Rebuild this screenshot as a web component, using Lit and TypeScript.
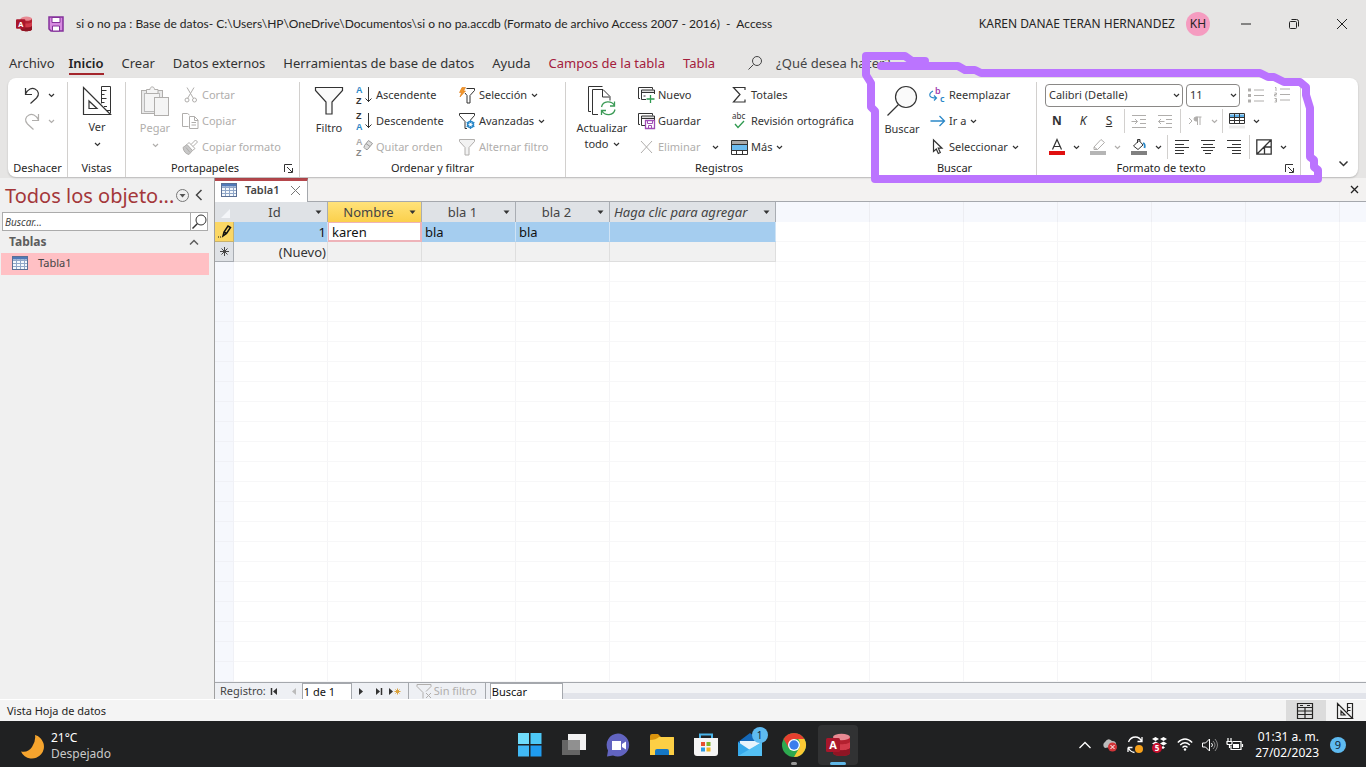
import { LitElement, html, css, svg, nothing } from "lit";
import { customElement, property } from "lit/decorators.js";
import { classMap } from "lit/directives/class-map.js";

const ico = (w: number, h: number, body: unknown) =>
  html`<svg width=${w} height=${h} viewBox="0 0 ${w} ${h}" fill="none" stroke="currentColor" aria-hidden="true">${body}</svg>`;

const chevron = () => ico(7, 5, svg`<path d="M1 1l2.500 2.500l2.500-2.500" stroke-width="1.200"/>`);

const letters = (top: string, bottom: string, topColor: string, bottomColor: string, tail: unknown) =>
  ico(17, 18, svg`
    <text x="0" y="7" font-size="9" font-family="Liberation Sans" font-weight="700" stroke="none" fill=${topColor}>${top}</text>
    <text x="0" y="18" font-size="9" font-family="Liberation Sans" font-weight="700" stroke="none" fill=${bottomColor}>${bottom}</text>
    ${tail}`);

const downArrow = svg`<path d="M12.500 1v15M9.500 12.500l3 3l3-3"/>`;
const cards = svg`<path d="M2 11.500h-1.500v-11h14v2"/><path d="M3 3h13v2.500h-13z" fill="#ddd" stroke="none"/><path d="M8 12.500h-4.500v-9.500h13v4M3.500 5.500h13"/>`;

const icons = {
  undo: ico(16, 17, svg`<path d="M1.500 1v6.500h6.500M1.500 7C4 2 8 .5 11 2c4 2 4.500 6 1.500 9l-6 5.500" stroke-width="1.200"/>`),
  redo: ico(16, 17, svg`<path d="M14.500 1v6.500h-6.500M14.500 7C12 2 8 .5 5 2c-4 2-4.500 6-1.500 9l6 5.500" stroke-width="1.200"/>`),
  view: ico(28, 29, svg`<path d="M.5 1.500v27h27zM6 15v7.500h8z" stroke-width="1.200"/><path d="M18.500 17.500v-17h9v27M18.500 4.500h5M18.500 8.500h3M18.500 12.500h5M18.500 16.500h3M21 20.500h3M24 24.500h3"/>`),
  paste: ico(28, 30, svg`<rect x=".5" y="4.500" width="21" height="23" fill="#e9e9e9"/><rect x="3.500" y="7.500" width="15" height="18" fill="#f4f4f4" stroke="#bbb"/><path d="M5.500 7.500v-4h3.500c0-3.500 4.500-3.500 4.500 0h3.500v4z" fill="#f4f4f4"/><rect x="13.500" y="11.500" width="14" height="18" fill="#f4f4f4"/>`),
  cut: ico(16, 16, svg`<path d="M4 .5l6.500 11M11 .5l-6.500 11"/><circle cx="4" cy="13" r="2"/><circle cx="11.500" cy="13" r="2"/>`),
  copy: ico(17, 16, svg`<path d="M6.500 13.500h-6v-13h5l2 1.500"/><path d="M7.500 3.500h5l3.500 3.500v8.500h-8.500zM12.500 3.500v4h3.500M9.500 9.500h4.500M9.500 12h4.500"/>`),
  brush: ico(17, 16, svg`<path d="M1 8.500l4-3l5.500 6l-3.500 4q-5-1-6-7z" fill="#c8c8c8"/><path d="M5 5.500l2-2l6 6l-2.500 2M9 5.500l4.500-4.500l2 2l-4.500 4.500M4 8.500l4 5"/>`),
  funnel: ico(28, 30, svg`<path d="M.5 1.500h27v3l-10.500 11.500v12h-6v-12l-10.500-11.500z" fill="#fafafa" stroke-width="1.200"/>`),
  asc: letters("A", "Z", "#2b88c8", "#333", downArrow),
  desc: letters("Z", "A", "#333", "#2b88c8", downArrow),
  clearSort: letters("A", "Z", "#aaa", "#888", svg`<path d="M8.500 7.500l4-5l4 3l-5 6h-1.500l-2-2zM10 5.500l4 3" fill="#ddd" stroke="#999"/>`),
  selection: ico(17, 17, svg`<path d="M7.500 1.500h8v2l-4.500 5v7.500h-3v-7.500l-2-2.500"/><path d="M3 .5h3.500l-2 3.500h2l-5.500 6l1.500-4.500h-2z" fill="#f0962c" stroke="#e07a10" stroke-width=".6"/>`),
  advanced: ico(17, 17, svg`<path d="M8 15.500h-2v-7l-5.500-6v-2h15v2l-4 4.500"/><circle cx="11.500" cy="11.500" r="3" stroke="#2b88c8" stroke-width="1.500"/><path d="M11.500 7v9M7.600 9.200l7.800 4.600M7.600 13.800l7.800-4.600" stroke="#2b88c8" stroke-width="1.300"/><circle cx="11.500" cy="11.500" r="1.500" fill="#fff" stroke="none"/>`),
  toggleFilter: ico(17, 17, svg`<path d="M.5 .5h15v2l-5.500 6v7.500h-4v-7.500l-5.500-6z" fill="#f2f2f2"/>`),
  refresh: ico(28, 30, svg`<path d="M3 25.500h-2.500v-25h14" /><path d="M10 28.500h-5.500v-25h10.500l7 7v4M14.500 4v7h7"/><path d="M13.500 21c1.500-6.500 10-6.500 13-1.500M26.500 15.500v4.500h-4.500M27 23.500c-1.500 6.500-10 6.500-13 1.500M13.500 29v-4.500h4.500" stroke="#3a9a55" stroke-width="1.300"/>`),
  newRec: ico(17, 16, svg`${cards}<path d="M5.500 9h3" stroke-dasharray="2 1"/><path d="M12.500 8v8M8.500 12h8" stroke="#2f9a50" stroke-width="1.300"/>`),
  saveRec: ico(17, 16, svg`${cards}<path d="M7.500 7.500h9v8h-9z" fill="#fff" stroke="#a04db5" stroke-width="1.300"/><path d="M9.500 8v2.500h5v-2.500M10.500 15v-2.500h3v2.500" stroke="#a04db5"/>`),
  remove: ico(17, 16, svg`<path d="M3 2l11 12M14 2l-11 12"/>`),
  sigma: ico(15, 16, svg`<path d="M13 3v-2.500h-11.500l6.500 7l-6.500 7.500h11.500v-2.500" stroke-width="1.200"/>`),
  spell: ico(17, 18, svg`<text x="1" y="7" font-size="8" font-family="Noto Sans" stroke="none" fill="#333">abc</text><path d="M4 12l3 3.500l6-6.500" stroke="#2f9a50" stroke-width="1.300"/>`),
  more: ico(17, 17, svg`<path d="M1 2h15v3h-15z" fill="#aaa" stroke="none"/><path d="M1 6h15v5h-15z" fill="#6cbcf0" stroke="none"/><path d="M.5 1.500h16v14h-16zM.5 5.500h16M.5 11.500h16M5.500 11v5M11.500 11v5M5.500 5v1M11.500 5v1"/>`),
  find: ico(30, 31, svg`<circle cx="19" cy="11" r="10.500" fill="#fafafa" stroke-width="1.200"/><path d="M11.500 18.500l-11 11" stroke-width="1.200"/>`),
  replace: ico(17, 18, svg`<text x="6" y="8" font-size="9" font-family="Noto Sans" font-weight="600" stroke="none" fill="#a33fb0">b</text><text x="11" y="16" font-size="9" font-family="Noto Sans" font-weight="600" stroke="none" fill="#2b88c8">c</text><path d="M4 5q-4 2-3 5q1 2 6 2M5 9.500l2.500 2.500l-2.500 2.500" stroke="#2b88c8" stroke-width="1.200"/>`),
  goto: ico(16, 12, svg`<path d="M.5 6h14M9.500 1l5 5l-5 5" stroke="#2b88c8" stroke-width="1.300"/>`),
  pointer: ico(12, 16, svg`<path d="M1.500 1v11.500l2.800-2.500l2 4.500l2-1l-2-4.300h3.700z" stroke-width="1.200"/>`),
  bullets: ico(16, 15, svg`<path d="M6 2h10M6 7.500h10M6 13h10"/><path d="M0 2h3M0 7.500h3M0 13h3" stroke-width="3"/>`),
  numbers: ico(16, 16, svg`<path d="M6 2h10M6 7.500h10M6 13h10"/><path d="M1 .5h1v3.500M.5 6h2v1.500h-2v1.500h2M.5 11.500h2v3.500h-2M1 13.200h1.500"/>`),
  indent: ico(16, 13, svg`<path d="M1 .5h14M9 4.500h6M9 8.500h6M1 12.500h14M.5 6.500h6M4 4l2.500 2.500l-2.500 2.500"/>`),
  outdent: ico(16, 13, svg`<path d="M1 .5h14M9 4.500h6M9 8.500h6M1 12.500h14M1.500 6.500h6M4 4l-2.500 2.500l2.500 2.500"/>`),
  pilcrow: ico(14, 10, svg`<path d="M1 2l3 3l-3 3M9.500 1v8M12 1v8M13.500 1h-5"/><path d="M9.500 1h-1.500q-2 0-2 2t2 2h1.500z" fill="currentColor"/>`),
  gridTable: ico(16, 16, svg`<path d="M1 1.500h14v3h-14z" fill="#5cb0ea" stroke="none"/><path d="M.5 .5h15v10h-15zM.5 4.500h15M.5 7.500h15M5.500 1v9M10.500 1v9"/><path d="M0 14h16" stroke="#ececec" stroke-width="3"/>`),
  fontColor: ico(16, 16, svg`<path d="M3.500 10.500l4.500-10l4.500 10M5 7.500h6" stroke-width="1.200"/><path d="M0 14h16" stroke="#e01010" stroke-width="4"/>`),
  highlight: ico(16, 16, svg`<path d="M4 8l7-7.500l3.500 3l-7 7h-3.500zM4 8l3.500 2.500"/><path d="M0 14h16" stroke="#b5b5b5" stroke-width="4"/>`),
  fill: ico(16, 16, svg`<path d="M2.500 7l5.500-5.500l4 4.500l-5 4.500zM6.500 4v-3.500h2.500v2"/><path d="M12 4q2.500 1 1.500 5" stroke="#2b88c8" stroke-width="1.800"/><path d="M0 14h16" stroke="#808080" stroke-width="4"/>`),
  left: ico(16, 15, svg`<path d="M1 .5h14M1 4.500h9M1 7.500h14M1 10.500h9M1 13.500h9"/>`),
  center: ico(16, 15, svg`<path d="M1 .5h14M3 4.500h10M1 7.500h14M3 10.500h10M5 13.500h6"/>`),
  right: ico(16, 15, svg`<path d="M1 .5h14M6 4.500h9M1 7.500h14M6 10.500h9M6 13.500h9"/>`),
  altRow: ico(16, 16, svg`<path d="M.8.800h14.400v14.400h-14.400zM.8 15.200l14.400-14.400M8 8h7M8.500 8v7" stroke-width="1.300"/>`),
  launcher: ico(9, 9, svg`<path d="M.5 8v-7.500h7.500M3 3l5 5M8.500 4v4.500h-4.500"/>`),
  table: ico(16, 14, svg`<rect x=".5" y=".5" width="15" height="13" fill="#f4f8fc" stroke="#5a6f94"/><path d="M1 1h14v2.500h-14z" fill="#4f79b8" stroke="none"/><path d="M1 4.500h14M1 7.500h14M1 10.500h14M4.500 3v10M8.500 3v10M12.500 3v10" stroke="#8fa6c8"/>`),
  access: (s: number) => html`<svg width=${s} height=${s} viewBox="0 0 24 24" aria-hidden="true"><path d="M7 4v16c0 4 17 4 17 0v-16z" fill="#b3202f"/><path d="M7 9c2 3 15 3 17 0v6c-2 3-15 3-17 0z" fill="#d13a4a"/><path d="M7 15c2 3 15 3 17 0v5c0 4-17 4-17 0z" fill="#8f1524"/><ellipse cx="15.500" cy="4" rx="8.500" ry="3.200" fill="#e88a93"/><rect y="5" width="14" height="14" rx="1.500" fill="#a9162b"/><text x="7" y="16" text-anchor="middle" font-size="11" font-weight="700" font-family="Noto Sans" fill="#fff">A</text></svg>`,
};

@customElement("ribbon-group")
export class RibbonGroup extends LitElement {
  @property() label = "";
  @property({ type: Boolean }) launcher = false;

  static styles = css`
    :host { display: grid; grid-template-rows: 78px 16px; border-right: 1px solid #d2d0ce; box-sizing: border-box; flex: none; }
    .body { display: flex; }
    .foot { display: flex; align-items: center; }
    .label { flex: 1; text-align: center; white-space: nowrap; font-size: 11px; line-height: 16px; color: #252423; }
    button { all: unset; display: flex; width: 15px; color: #333; }
  `;

  render() {
    return html`
      <div class="body"><slot></slot></div>
      <div class="foot">
        <span class="label">${this.label}</span>
        ${this.launcher ? html`<button aria-label="Más opciones de ${this.label}">${icons.launcher}</button>` : nothing}
      </div>`;
  }
}

@customElement("app-root")
export class AppRoot extends LitElement {
  static styles = css`
    :host { display: flex; flex-direction: column; height: 100vh; overflow: hidden; background: #e6e5e4; color: #252423; font: 12px/16px "Noto Sans", "Open Sans", sans-serif; }
    * { box-sizing: border-box; }
    button { all: unset; box-sizing: border-box; display: flex; align-items: center; }
    button:focus-visible, a:focus-visible { outline: 1px solid #a4373a; }
    svg { display: block; flex: none; overflow: visible; }
    .center { justify-content: center; }

    .titlebar { display: flex; align-items: center; height: 48px; flex: none; padding-left: 16px; }
    .save { margin: 0 12px 0 16px; }
    .doc { flex: 1; margin: 0; font-family: Lato, sans-serif; font-size: 12px; font-weight: 400; white-space: pre; overflow: hidden; }
    .account { gap: 11px; }
    .avatar { display: grid; place-items: center; width: 24px; height: 24px; border-radius: 50%; background: #f59cc0; }
    .winbtn { width: 48px; height: 48px; color: #222; justify-content: center; }
    .winbtns { display: flex; margin-left: 12px; }

    .tabs { display: flex; height: 30px; flex: none; padding: 5px 0 0 9px; font-size: 13px; line-height: 18px; color: #333; }
    .tab { color: inherit; text-decoration: none; white-space: nowrap; height: 22px; margin-right: 18px; padding-top: 1px; }
    .tab.on { font-weight: 600; color: #222; border-bottom: 2px solid #a4262c; margin-left: -4px; }
    .tab.ctx { color: #a4203c; }
    .tell { gap: 14px; align-self: flex-start; height: 20px; margin-left: 15px; color: #444; }

    .stage { position: relative; flex: none; }
    .ribbon { display: flex; margin: 0 8px; padding: 4px 6px 0 0; height: 99px; background: #fff; border-radius: 8px; box-shadow: 0 1px 2px #0003; color: #333; font-size: 11px; }
    .markup { position: absolute; left: 0; top: -78px; pointer-events: none; z-index: 2; }
    .g-undo { width: 60px; } .g-view { width: 58px; } .g-clip { width: 174px; } .g-sort { width: 266px; }
    .g-rec { width: 307px; } .g-find { width: 164px; } .g-text { width: 264px; }
    .off, .nofilter.off { color: #b0aeac; }
    .stack { display: flex; flex-direction: column; }
    .row { display: flex; align-items: center; height: 26px; gap: 3px; white-space: nowrap; }
    .row.spread { justify-content: space-between; }
    .tool { height: 26px; gap: 3px; white-space: nowrap; }
    .tool > svg { margin-left: 1px; }
    .slot { display: flex; justify-content: center; width: 17px; flex: none; }
    .big { flex-direction: column; text-align: center; padding-top: 4px; gap: 4px; line-height: 16px; width: 58px; margin-right: -2px; }
    .big svg:not(:first-child) { margin-top: 3px; }
    .big.wide { width: 72px; margin-right: 0; }
    .inline { display: flex; align-items: center; gap: 4px; }
    .undos { padding: 0 0 0 16px; }
    .undos .row { gap: 8px; }
    .c-sort { width: 103px; } .c-rec { width: 93px; padding-right: 10px; }
    .fmt { padding-left: 7px; }
    .pick { display: grid; align-items: center; height: 23px; border: 1px solid #8a8886; border-radius: 4px; background: #fff; }
    .pick select { all: unset; grid-area: 1 / 1; padding-left: 3px; line-height: 16px; }
    .pick svg { grid-area: 1 / 1; justify-self: end; margin-right: 2px; pointer-events: none; }
    .pick.name { width: 138px; margin-left: 1px; } .pick.size { width: 54px; }
    .sq { width: 26px; height: 24px; justify-content: center; font-size: 12px; }
    .dd { width: 12px; height: 24px; justify-content: center; }
    .pair { display: flex; margin-right: 3px; }
    .bar { width: 1px; height: 24px; margin: 0 1px 0 2px; background: #d2d0ce; }
    .pair + .bar { margin-left: 0; }
    .tight { gap: 0; }
    .end { margin-left: auto; align-self: flex-end; height: 26px; padding-right: 4px; }

    .main { flex: 1; min-height: 0; display: flex; margin-top: 1px; background: #f0f0f0; border-bottom: 1px solid #fff; }
    .nav { width: 209px; margin-right: 5px; flex: none; }
    .navhead { display: flex; align-items: center; height: 34px; padding: 0 4px 0 5px; gap: 4px; }
    .navhead h2 { flex: 1; margin: 0; padding-top: 2px; font-size: 20px; line-height: 28px; font-weight: 400; color: #a4373a; white-space: nowrap; width: 0; }
    .search { display: flex; height: 19px; margin: 0 1px 0 2px; border: 1px solid #ababab; background: #fff; }
    .search input { all: unset; flex: 1; min-width: 0; padding-left: 2px; font-size: 10px; font-style: italic; color: #444; }
    .search input::placeholder { color: #444; opacity: 1; }
    .search button { width: 17px; border-left: 1px solid #ababab; justify-content: center; color: #333; }
    .navgroup { width: 100%; height: 22px; justify-content: space-between; padding: 0 10px 0 9px; font-size: 12px; font-weight: 700; color: #5d5d5d; }
    .navitem { display: flex; align-items: center; gap: 10px; height: 22px; margin-left: 1px; padding: 0 0 2px 11px; background: #ffc0c4; color: #444; font-size: 11px; text-decoration: none; }

    .doccol { flex: 1; min-width: 0; display: flex; flex-direction: column; border-left: 1px solid #a0a0a0; }
    .doctabs { display: flex; height: 24px; flex: none; align-items: flex-end; background: #f3f2f1; border-bottom: 1px solid #a5a8ad; }
    .doctab { display: flex; align-items: center; gap: 8px; height: 24px; margin-bottom: -1px; padding: 0 6px 3px; background: #fff; border-top: 3px solid #b5474c; border-right: 1px solid #a5a8ad; font-size: 11px; font-weight: 600; color: #444; }
    .doctab button { margin-left: 2px; }
    .closeall { margin-left: auto; height: 24px; padding-right: 7px; color: #222; }

    .sheet { flex: 1; min-height: 0; overflow: hidden; background: #fff; }
    table { border-collapse: separate; border-spacing: 0; table-layout: fixed; width: 1219px; font-size: 13px; line-height: 19px; color: #333; }
    col.sel { width: 19px; } col.field { width: 94px; } col.add { width: 166px; }
    tr { height: 20px; }
    th, td { padding: 0; height: 20px; border-right: 1px solid #f5f5f7; border-bottom: 1px solid #f7f7f8; font-weight: 400; white-space: nowrap; overflow: hidden; }
    td:first-child { background: #f6f8fd; border-color: #f0f1f6; }
    thead th { background: #dfe2e6; border-color: #a9adb3; border-bottom: 0; color: #444; }
    thead th.none { background: #f6f8fd; border-color: #ecedf2; }
    .head { display: flex; align-items: center; padding-right: 5px; }
    .head span { flex: 1; text-align: center; }
    .head.it span { font-style: italic; text-align: left; padding-left: 4px; }
    thead th.act { background: linear-gradient(#ffe27a, #fbd04c); }
    thead th.corner { background: #dfe2e6; border-right-color: #dfe2e6; }
    tr.cur td.data { background: #a5cdef; border-color: #cfe3f5; border-bottom-color: #a5cdef; color: #111; }
    tr.cur td.first { background: #fbd765; border-color: #c9b26b; }
    tr.cur td.edit { background: #fff; border: 2px solid #eeb3b9; border-left-width: 1px; border-top-width: 1px; padding-top: 1px; line-height: 16px; }
    tr.fresh td.data { background: #f1f1f1; border-color: #dedede; }
    tr.fresh td.first { background: #dfe2e6; border-color: #a9adb3; }
    td.data { padding: 2px 0 0 3px; line-height: 17px; }
    td.num { text-align: right; padding-left: 0; padding-right: 1px; }
    td.first svg { margin: auto; }

    .record { display: flex; align-items: center; height: 17px; flex: none; overflow: hidden; padding-left: 5px; background: #eef0f4; border-top: 1px solid #a5a8ad; font-size: 11px; line-height: 16px; color: #444; }
    .record .step { justify-content: center; height: 16px; color: #333; width: 18px; }
    .record .step.slim { width: 14px; }
    .record input { all: unset; box-sizing: border-box; height: 17px; padding-left: 1px; background: #fff; border: 1px solid #a5a8ad; border-bottom: 0; color: #111; font-size: 11px; line-height: 16px; }
    .record .pos { width: 50px; } .record .recsearch { width: 73px; }
    .nofilter { gap: 2px; height: 16px; margin: 0 4px 0 6px; padding: 0 8px 0 7px; border: solid #a5a8ad; border-width: 0 1px; }
    .record .rest { flex: 1; height: 16px; background: linear-gradient(#f3f4f6 60%, #e2e4ea 60%); }

    .status { display: flex; align-items: center; height: 21px; flex: none; background: #f4f4f4; padding-left: 7px; font-size: 11px; }
    .status .sp { flex: 1; }
    .mode { width: 40px; height: 21px; justify-content: center; padding-right: 2px; }
    .mode.on { background: #dcdcdc; }

    .taskbar { display: grid; grid-template-columns: 1fr auto 1fr; align-items: center; height: 46px; flex: none; background: #202122; color: #fff; font-size: 12px; line-height: 16px; }
    .weather { gap: 7px; padding: 3px 0 0 20px; }
    .weather small { display: block; font-size: 12px; color: #c9c9c9; }
    .apps { display: flex; gap: 4px; padding: 2px 0 0 1px; }
    .app { width: 40px; height: 40px; justify-content: center; position: relative; border-radius: 4px; }
    .app.live { background: #313233; }
    .dot { position: absolute; bottom: 0; width: 6px; height: 3px; border-radius: 2px; background: #999; }
    .live .dot { width: 16px; background: #60b8e8; }
    .count { position: absolute; right: 2px; top: 2px; width: 16px; height: 16px; border-radius: 50%; background: #5ebaf0; color: #123; text-align: center; font-size: 10px; line-height: 16px; }
    .tray { display: flex; align-items: center; justify-content: flex-end; gap: 8px; padding: 1px 20px 0 0; }
    .tray button { width: 17px; justify-content: center; }
    .clock { text-align: right; margin-left: 4px; white-space: nowrap; }
    .note { display: grid; place-items: center; width: 16px; height: 16px; margin-left: 3px; border-radius: 50%; background: #5ebaf0; color: #123; font-size: 11px; }
  `;

  private tool(icon: unknown, text: string, opts: { off?: boolean; menu?: boolean } = {}) {
    return html`<button class=${classMap({ tool: true, off: !!opts.off })} ?disabled=${opts.off}>
      <span class="slot">${icon}</span><span>${text}</span>${opts.menu ? chevron() : nothing}
    </button>`;
  }

  private square(icon: unknown, label: string, off = false) {
    return html`<button class=${classMap({ sq: true, off })} aria-label=${label}>${icon}</button>`;
  }

  private drop(label: string, off = false) {
    return html`<button class=${classMap({ dd: true, off })} aria-label=${label}>${chevron()}</button>`;
  }

  private titlebar() {
    return html`<header class="titlebar">
      ${icons.access(16)}
      <button class="save" aria-label="Guardar">${ico(16, 16, svg`<path d="M1 1h14v14h-12l-2-2z" fill="#d78be0" stroke="#84319a" stroke-width="1.500"/><path d="M4 1.500h8v5h-8zM4.500 10h7v5h-7z" fill="#fff" stroke="#84319a"/>`)}</button>
      <h1 class="doc">si o no pa : Base de datos- C:\\Users\\HP\\OneDrive\\Documentos\\si o no pa.accdb (Formato de archivo Access 2007 - 2016)  -  Access</h1>
      <button class="account"><span>KAREN DANAE TERAN HERNANDEZ</span><span class="avatar">KH</span></button>
      <div class="winbtns">
        <button class="winbtn" aria-label="Minimizar">${ico(10, 10, svg`<path d="M0 5h10"/>`)}</button>
        <button class="winbtn" aria-label="Restaurar">${ico(10, 10, svg`<rect x=".5" y="2.500" width="7" height="7" rx="1"/><path d="M2.500 .5h5q2 0 2 2v5"/>`)}</button>
        <button class="winbtn" aria-label="Cerrar">${ico(10, 10, svg`<path d="M0 0l10 10M10 0l-10 10"/>`)}</button>
      </div>
    </header>`;
  }

  private tabs() {
    const names = ["Archivo", "Inicio", "Crear", "Datos externos", "Herramientas de base de datos", "Ayuda", "Campos de la tabla", "Tabla"];
    return html`<nav class="tabs">
      ${names.map((n, i) => html`<a href="#" class=${classMap({ tab: true, on: i === 1, ctx: i > 5 })}>${n}</a>`)}
      <button class="tell">${ico(14, 14, svg`<circle cx="9" cy="5" r="4.500"/><path d="M5.500 8.500l-5 5"/>`)}<span>¿Qué desea hacer?</span></button>
    </nav>`;
  }

  private ribbon() {
    return html`<div class="stage">
      <div class="ribbon">
        <ribbon-group class="g-undo" label="Deshacer">
          <div class="stack undos">
            <div class="row"><button aria-label="Deshacer">${icons.undo}</button><button aria-label="Historial">${chevron()}</button></div>
            <div class="row off"><button aria-label="Rehacer">${icons.redo}</button><button aria-label="Historial de rehacer">${chevron()}</button></div>
          </div>
        </ribbon-group>
        <ribbon-group class="g-view" label="Vistas">
          <button class="big">${icons.view}<span>Ver</span>${chevron()}</button>
        </ribbon-group>
        <ribbon-group class="g-clip" label="Portapapeles" launcher>
          <button class="big off">${icons.paste}<span>Pegar</span>${chevron()}</button>
          <div class="stack">
            ${this.tool(icons.cut, "Cortar", { off: true })}
            ${this.tool(icons.copy, "Copiar", { off: true })}
            ${this.tool(icons.brush, "Copiar formato", { off: true })}
          </div>
        </ribbon-group>
        <ribbon-group class="g-sort" label="Ordenar y filtrar">
          <button class="big">${icons.funnel}<span>Filtro</span></button>
          <div class="stack c-sort">
            ${this.tool(icons.asc, "Ascendente")}
            ${this.tool(icons.desc, "Descendente")}
            ${this.tool(icons.clearSort, "Quitar orden", { off: true })}
          </div>
          <div class="stack">
            ${this.tool(icons.selection, "Selección", { menu: true })}
            ${this.tool(icons.advanced, "Avanzadas", { menu: true })}
            ${this.tool(icons.toggleFilter, "Alternar filtro", { off: true })}
          </div>
        </ribbon-group>
        <ribbon-group class="g-rec" label="Registros">
          <button class="big wide">${icons.refresh}<span>Actualizar<br><span class="inline center">todo ${chevron()}</span></span></button>
          <div class="stack c-rec">
            ${this.tool(icons.newRec, "Nuevo")}
            ${this.tool(icons.saveRec, "Guardar")}
            <div class="row spread">${this.tool(icons.remove, "Eliminar", { off: true })}${this.drop("Opciones de eliminar")}</div>
          </div>
          <div class="stack">
            ${this.tool(icons.sigma, "Totales")}
            ${this.tool(icons.spell, "Revisión ortográfica")}
            ${this.tool(icons.more, "Más", { menu: true })}
          </div>
        </ribbon-group>
        <ribbon-group class="g-find" label="Buscar">
          <button class="big">${icons.find}<span>Buscar</span></button>
          <div class="stack">
            ${this.tool(icons.replace, "Reemplazar")}
            ${this.tool(icons.goto, "Ir a", { menu: true })}
            ${this.tool(icons.pointer, "Seleccionar", { menu: true })}
          </div>
        </ribbon-group>
        <ribbon-group class="g-text" label="Formato de texto" launcher>
          <div class="stack fmt">
            <div class="row">
              <label class="pick name"><select aria-label="Fuente"><option>Calibri (Detalle)</option></select>${chevron()}</label>
              <label class="pick size"><select aria-label="Tamaño"><option>11</option></select>${chevron()}</label>
              <div class="inline tight off">${this.square(icons.bullets, "Viñetas", true)}${this.square(icons.numbers, "Numeración", true)}</div>
            </div>
            <div class="row tight">
              ${this.square(html`<b>N</b>`, "Negrita")}${this.square(html`<i>K</i>`, "Cursiva")}${this.square(html`<u>S</u>`, "Subrayado")}
              <span class="bar"></span>
              ${this.square(icons.indent, "Aumentar sangría", true)}${this.square(icons.outdent, "Disminuir sangría", true)}
              <span class="bar"></span>
              ${this.square(icons.pilcrow, "Dirección", true)}${this.drop("Opciones de dirección", true)}
              <span class="bar"></span>
              ${this.square(icons.gridTable, "Líneas de división")}${this.drop("Opciones de líneas")}
            </div>
            <div class="row tight">
              <span class="pair">${this.square(icons.fontColor, "Color de fuente")}${this.drop("Colores de fuente")}</span>
              <span class="pair">${this.square(icons.highlight, "Resaltado", true)}${this.drop("Colores de resaltado", true)}</span>
              <span class="pair">${this.square(icons.fill, "Color de fondo")}${this.drop("Colores de fondo")}</span>
              <span class="bar"></span>
              ${this.square(icons.left, "Izquierda")}${this.square(icons.center, "Centrar")}${this.square(icons.right, "Derecha")}
              <span class="bar"></span>
              ${this.square(icons.altRow, "Color de fila alternativo")}${this.drop("Colores de fila")}
            </div>
          </div>
        </ribbon-group>
        <button class="end" aria-label="Contraer la cinta">${ico(9, 6, svg`<path d="M.5 .5l4 4l4-4" stroke-width="1.500"/>`)}</button>
      </div>
      <svg class="markup" width="1366" height="190" viewBox="0 0 1366 190" fill="none" stroke="#bb74ff" stroke-width="8" stroke-linejoin="round" stroke-linecap="round" aria-hidden="true">
        <path d="M881 66H958L965 70H975L981 73H1260L1268 77H1274L1284 82H1300L1306 87V95L1310 108V157L1314 160V167L1318 170V179H875V111L871 107V83L866 75V56H905L912 61H925"/>
      </svg>
    </div>`;
  }

  private navPane() {
    return html`<aside class="nav">
      <div class="navhead">
        <h2>Todos los objeto...</h2>
        <button aria-label="Filtrar objetos">${ico(13, 13, svg`<circle cx="6.500" cy="6.500" r="6" stroke="#777"/><path d="M3.500 5h6l-3 3.500z" fill="#555" stroke="none"/>`)}</button>
        <button aria-label="Contraer panel">${ico(12, 12, svg`<path d="M8.500 1l-5 5l5 5" stroke="#444" stroke-width="1.500"/>`)}</button>
      </div>
      <div class="search">
        <input aria-label="Buscar objetos" placeholder="Buscar...">
        <button aria-label="Buscar">${ico(15, 16, svg`<circle cx="9" cy="6" r="5"/><path d="M5.500 9.500l-5 5" stroke-width="1.500"/>`)}</button>
      </div>
      <button class="navgroup"><span>Tablas</span>${ico(10, 6, svg`<path d="M1 5.500l4-4l4 4" stroke-width="1.500"/>`)}</button>
      <a class="navitem" href="#">${icons.table}<span>Tabla1</span></a>
    </aside>`;
  }

  private head(name: string, cls = "", it = false) {
    return html`<th class=${cls} scope="col"><div class=${classMap({ head: true, it })}><span>${name}</span>${ico(7, 5, svg`<path d="M.5 .5h6l-3 3.500z" fill="#333" stroke="none"/>`)}</div></th>`;
  }

  private sheet() {
    const extra = [0, 1, 2, 3, 4, 5, 6];
    const blanks = Array.from({ length: 60 });
    const pad = extra.map(() => html`<td></td>`);
    return html`<div class="sheet"><table>
      <colgroup><col class="sel"><col class="field"><col class="field"><col class="field"><col class="field"><col class="add">${extra.map(() => html`<col class="field">`)}</colgroup>
      <thead><tr>
        <th class="corner">${ico(18, 18, svg`<path d="M15 6v9h-9z" fill="#f4f6f9" stroke="none"/>`)}</th>
        ${this.head("Id")}${this.head("Nombre", "act")}${this.head("bla 1")}${this.head("bla 2")}${this.head("Haga clic para agregar", "", true)}
        ${extra.map(() => html`<th class="none"></th>`)}
      </tr></thead>
      <tbody>
        <tr class="cur">
          <td class="first">${ico(13, 13, svg`<path d="M5 11l1-4l4-6l2.500 1.500l-4 6zM6 7l2.500 1.500" stroke="#111" stroke-width="1.500"/><path d="M0 12h1M2 12h1" stroke="#111"/>`)}</td>
          <td class="data num">1</td><td class="data edit">karen</td><td class="data">bla</td><td class="data">bla</td><td class="data"></td>${pad}
        </tr>
        <tr class="fresh">
          <td class="first">${ico(11, 11, svg`<path d="M5.500 1v9M1 5.500h9M2.500 2.500l6 6M8.500 2.500l-6 6" stroke="#444"/>`)}</td>
          <td class="data num">(Nuevo)</td><td class="data"></td><td class="data"></td><td class="data"></td><td class="data"></td>${pad}
        </tr>
        ${blanks.map(() => html`<tr><td></td><td></td><td></td><td></td><td></td><td></td>${pad}</tr>`)}
      </tbody>
    </table></div>`;
  }

  private docArea() {
    const step = (label: string, body: unknown, slim = false) =>
      html`<button class=${classMap({ step: true, slim })} aria-label=${label}>${ico(12, 9, body)}</button>`;
    return html`<section class="doccol">
      <div class="doctabs">
        <div class="doctab">${icons.table}<span>Tabla1</span><button aria-label="Cerrar Tabla1">${ico(11, 11, svg`<path d="M1 1l9 9M10 1l-9 9" stroke="#777"/>`)}</button></div>
        <button class="closeall" aria-label="Cerrar">${ico(9, 9, svg`<path d="M1 1l7 7M8 1l-7 7" stroke-width="1.300"/>`)}</button>
      </div>
      ${this.sheet()}
      <div class="record">
        <span>Registro:</span>
        ${step("Primero", svg`<path d="M2.500 1v7" stroke-width="1.500"/><path d="M8 1v7l-4-3.500z" fill="currentColor" stroke="none"/>`)}
        ${step("Anterior", svg`<path d="M9 1v7l-4-3.500z" fill="#bbb" stroke="none"/>`)}
        <input class="pos" aria-label="Registro actual" .value=${"1 de 1"}>
        ${step("Siguiente", svg`<path d="M4 1v7l4-3.500z" fill="currentColor" stroke="none"/>`)}
        ${step("Último", svg`<path d="M3 1v7l4-3.500z" fill="currentColor" stroke="none"/><path d="M8.500 1v7" stroke-width="1.500"/>`)}
        ${step("Nuevo registro", svg`<path d="M0 1v7l4-3.500z" fill="currentColor" stroke="none"/><path d="M8.500 1.500v6M5.500 4.500h6M6.500 2.500l4 4M10.500 2.500l-4 4" stroke="#dba23c"/>`, true)}
        <button class="nofilter off">${ico(16, 15, svg`<path d="M7 14.500v-6l-6-6v-2h14v2l-5 5M10 9l5 5M15 9l-5 5"/>`)}<span>Sin filtro</span></button>
        <input class="recsearch" aria-label="Buscar en la hoja" .value=${"Buscar"}>
        <span class="rest"></span>
      </div>
    </section>`;
  }

  private taskbar() {
    const apps: [string, unknown, unknown?][] = [
      ["Inicio", ico(24, 24, svg`<g stroke="none"><path d="M0 0h11v11h-11z" fill="#6fdcfb"/><path d="M12.500 0h11v11h-11z" fill="#4dc8f7"/><path d="M0 12.500h11v11h-11z" fill="#41b9f5"/><path d="M12.500 12.500h11v11h-11z" fill="#1f9cf0"/></g>`)],
      ["Vista de tareas", ico(24, 24, svg`<path d="M6 1h18v16h-18z" fill="#f2f2f2" stroke="none"/><path d="M0 7h18v15h-18z" fill="#777c" stroke="none"/>`)],
      ["Chat", ico(24, 24, svg`<path d="M12 .5a11.500 11.500 0 1 1-5 22l-6 1l1-6a11.500 11.500 0 0 1 10-17z" fill="#6264c0" stroke="none"/><path d="M6 8h9v9h-9zM16 11l4-2.500v8l-4-2.500z" fill="#fff" stroke="none"/>`)],
      ["Explorador", ico(24, 24, svg`<g stroke="none"><path d="M0 3q0-2 2-2h6l3 3h13v6h-24z" fill="#d9930d"/><path d="M0 7q6 0 9-3h14q1 0 1 1v17h-24z" fill="#fccf45"/><path d="M5 22v-4q0-2 2-2h10q2 0 2 2v4z" fill="#1577c4"/></g>`)],
      ["Microsoft Store", ico(24, 24, svg`<path d="M6 5v-3.500h12v3.500" stroke="#4bb5ea" stroke-width="2"/><path d="M0 5h24v15q0 3-3 3h-18q-3 0-3-3z" fill="#f5f5f5" stroke="none"/><g stroke="none"><path d="M7 9h4v4h-4z" fill="#e74f30"/><path d="M12.500 9h4v4h-4z" fill="#7fb52c"/><path d="M7 14.500h4v4h-4z" fill="#2b9be3"/><path d="M12.500 14.500h4v4h-4z" fill="#f4b41c"/></g>`)],
      ["Correo", ico(24, 24, svg`<g stroke="none"><path d="M0 9l12-9l12 9v14h-24z" fill="#1468b8"/><path d="M2 8h20v9h-20z" fill="#e8f4fc"/><path d="M0 9l12 8l12-8v14h-24z" fill="#35a8ea"/><path d="M0 23l24-14v14z" fill="#54c0f4"/></g>`), html`<span class="count">1</span>`],
      ["Chrome", ico(24, 24, svg`<g stroke="none"><circle cx="12" cy="12" r="12" fill="#2da94f"/><path d="M1.600 6a12 12 0 0 1 20.800 0h-10.400l-5.200 9z" fill="#e6402f"/><path d="M22.400 6a12 12 0 0 1-10.400 18l5.200-9q2-5-1-9z" fill="#fcc934"/><circle cx="12" cy="12" r="6" fill="#fff"/><circle cx="12" cy="12" r="4.700" fill="#3b7ded"/></g>`), html`<span class="dot"></span>`],
      ["Access", icons.access(24), html`<span class="dot"></span>`],
    ];
    return html`<footer class="taskbar">
      <button class="weather">${ico(24, 24, svg`<path d="M15 1a12 12 0 1 1-14 16.500q7 1.500 11-4.500q4-6 3-12z" fill="#f5a42e" stroke="none"/>`)}<span>21°C<small>Despejado</small></span></button>
      <div class="apps">${apps.map(([label, icon, extra], i) => html`<button class=${classMap({ app: true, live: i === 7 })} aria-label=${label}>${icon}${extra ?? nothing}</button>`)}</div>
      <div class="tray">
        <button aria-label="Iconos ocultos">${ico(12, 8, svg`<path d="M.5 7l5.500-5.500l5.500 5.500" stroke-width="1.300"/>`)}</button>
        <button aria-label="OneDrive">${ico(17, 14, svg`<path d="M4 10a3.500 3.500 0 0 1 0-6q3-5 7-1q5 0 4 5z" fill="#bbb" stroke="none"/><circle cx="11.500" cy="9" r="4.500" fill="#d13438" stroke="none"/><path d="M9.500 7l4 4M13.500 7l-4 4" stroke="#fff"/>`)}</button>
        <button aria-label="Sincronización">${ico(16, 17, svg`<path d="M1.500 6q2-5 7-5q4 0 6 4M15 1v4.500h-4.500M1 11.500v4.500M1 11.500h4.500M1.500 12q2 4 6 4.500" stroke-width="1.300"/><circle cx="12" cy="13" r="4" fill="#f7a11a" stroke="none"/>`)}</button>
        <button aria-label="Dropbox">${ico(16, 16, svg`<path d="M3.500 0l3.500 2l-3.500 2l-3.500-2zM11.500 0l3.500 2l-3.500 2l-3.500-2zM3.500 4.500l3.500 2l-3.500 2l-3.500-2zM11.500 4.500l3.500 2l-3.500 2l-3.500-2zM11 9l2 1.500l-2 1.500l-2-1.500z" fill="#fff" stroke="none"/><circle cx="5" cy="11" r="5" fill="#c8102e" stroke="none"/><text x="5" y="14" text-anchor="middle" font-size="8" font-weight="700" font-family="Noto Sans" fill="#fff" stroke="none">5</text>`)}</button>
        <button aria-label="Wi-Fi">${ico(16, 13, svg`<path d="M.8 4.500q7.200-7 14.400 0M3.200 7q4.800-4.500 9.600 0M5.500 9.500q2.500-2.500 5 0" stroke-width="1.400"/><circle cx="8" cy="11.500" r="1.200" fill="#fff" stroke="none"/>`)}</button>
        <button aria-label="Volumen">${ico(16, 14, svg`<path d="M.5 5h3l4-4v12l-4-4h-3zM9.500 5q2 2 0 4"/><path d="M11 3q4 4 0 8M13 1q5 6 0 12" stroke="#888"/>`)}</button>
        <button aria-label="Batería">${ico(16, 14, svg`<path d="M6 3.500h8v8h-10v-4M15.500 6v3M1 0v3M4 0v3M0 3.500h5v2q0 1-1 1h-3q-1 0-1-1zM2.500 7v3" stroke-width="1.200"/><path d="M6 6h6v4h-6z" fill="#fff" stroke="none"/>`)}</button>
        <div class="clock">01:31 a. m.<br>27/02/2023</div>
        <span class="note">9</span>
      </div>
    </footer>`;
  }

  render() {
    return html`
      ${this.titlebar()}${this.tabs()}${this.ribbon()}
      <main class="main">${this.navPane()}${this.docArea()}</main>
      <div class="status">
        <span>Vista Hoja de datos</span><span class="sp"></span>
        <button class="mode on" aria-label="Vista Hoja de datos">${ico(16, 16, svg`<path d="M.5 .5h15v15h-15zM.5 4.500h15M.5 8h15M.5 11.500h15M8 4v11M3 2.500h3M10 2.500h3" stroke-width="1.200"/>`)}</button>
        <button class="mode" aria-label="Vista Diseño">${ico(16, 16, svg`<path d="M.5 .5v15h15zM4 8v4h4zM10.500 9v-8.500h5v15M10.500 4.500h3M11 7.500h2.500" stroke-width="1.200"/>`)}</button>
      </div>
      ${this.taskbar()}`;
  }
}
